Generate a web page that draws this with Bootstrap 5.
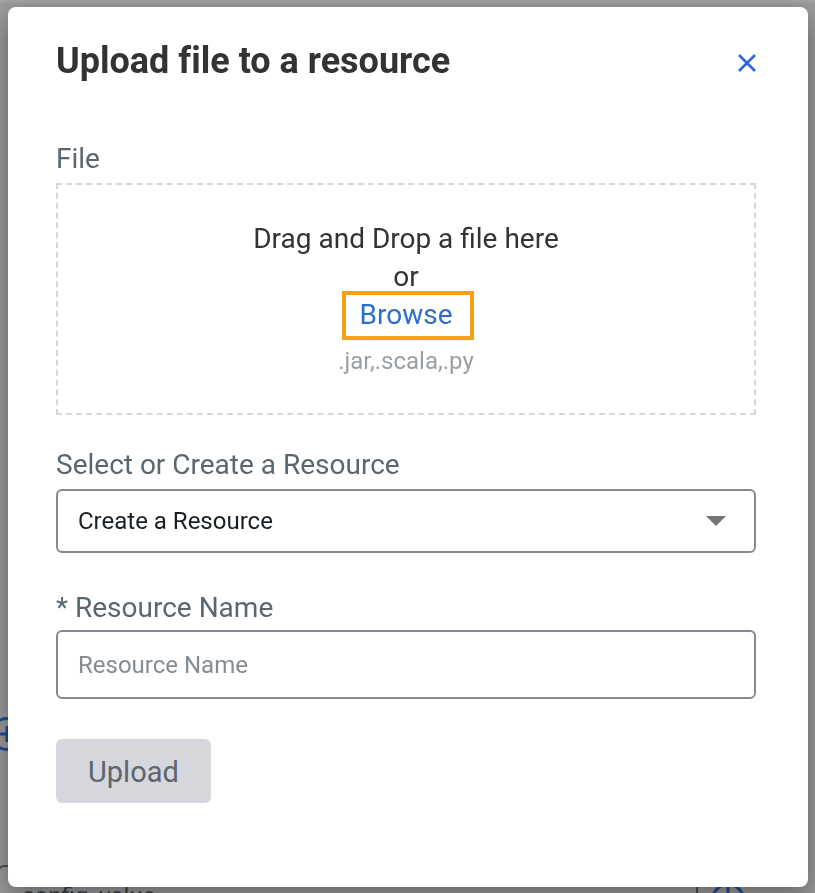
<!DOCTYPE html>
<html lang="en">
<head>
<meta charset="utf-8">
<meta name="viewport" content="width=device-width, initial-scale=1">
<title>Upload file to a resource</title>
<link href="https://cdn.jsdelivr.net/npm/bootstrap@5.3.0/dist/css/bootstrap.min.css" rel="stylesheet">
<style>
  body { font-family: Roboto, "Liberation Sans", sans-serif; background: #999; color: #333; }

  /* dimmed page behind the dialog */
  .under-page { position: fixed; inset: 0; overflow: hidden; background: #999; }
  .under-strip { height: 3px; background: #a3a3a3; }
  .under-bar { height: 32px; background: #9a9d9c; }
  .under-icon { display: block; width: 34px; height: 34px; fill: none; stroke: #1b4f9c; stroke-width: 3; }
  .under-add { margin: 682px 0 0 -10px; }
  .under-row { margin-top: 114px; gap: 13px; padding-right: 70px; }
  .under-field { height: 70px; padding: 0 20px 8px 22px; border: 2px solid #4c5053; border-radius: 6px; background: transparent; color: #3f4346; font-size: 24px; margin-left: -2px; }

  .dialog-wrap { min-height: 100vh; padding: 7px 7px 6px 8px; }
  .dialog-panel { padding: 32px 52px 84px 48px; border-radius: 8px; box-shadow: 0 8px 24px rgba(0, 0, 0, .35); }
  .dialog-title { font-size: 36px; line-height: 44px; font-weight: 700; color: #333; font-variant-ligatures: none; }
  .dialog-head { margin-bottom: 57px; }
  .close-btn { margin: 4px -8px 0 0; padding: 8px; line-height: 0; color: #2a68d4; }
  .field-label { font-size: 28px; line-height: 38px; color: #5b666d; margin-bottom: 5px; }
  .drop-zone { border: 2px dashed #d6d7dc; padding: 35px 16px 34px; margin-bottom: 31px; font-size: 28px; line-height: 38px; }
  .browse-btn { display: block; margin: -5px 0 3px 4px; padding: 1px 18px 2px 14px; border: 4px solid #f9a01b; border-radius: 0; font-size: 28px; line-height: 38px; color: #2b6fce; background: #fff; }
  .type-hint { font-size: 24px; line-height: 36px; color: #9a9fa4; }
  .field-box { border: 2px solid #838a90; border-radius: 6px; padding: 0 20px; font-size: 24px; background-color: #fff; }
  .field-box::placeholder { color: #838d93; }
  .resource-select { height: 64px; margin-bottom: 36px; color: #1a1f24; appearance: none; }
  .select-arrow { top: 27px; right: 30px; pointer-events: none; border: 10px solid transparent; border-top-color: #757575; border-bottom: 0; }
  .resource-input { height: 69px; margin-bottom: 40px; }
  .name-label { margin-bottom: 3px; }
  .upload-btn { height: 64px; padding: 3px 32px 0; border: 0; border-radius: 6px; font-size: 29px; }
  .upload-btn:disabled { background: #d6d7dc; color: #5b666d; opacity: 1; }
</style>
<script src="https://cdn.jsdelivr.net/npm/bootstrap@5.3.0/dist/js/bootstrap.bundle.min.js"></script>
</head>
<body>
<div class="under-page" aria-hidden="true">
  <div class="under-strip"></div>
  <div class="under-bar"></div>
  <svg class="under-icon under-add" viewBox="0 0 34 34"><circle cx="17" cy="17" r="15.5"/><path d="M17 9v16M9 17h16"/></svg>
  <div class="under-row d-flex align-items-center">
    <input class="under-field flex-grow-1" type="text" value="config_value" aria-label="Configuration value" tabindex="-1" readonly>
    <svg class="under-icon flex-shrink-0" viewBox="0 0 34 34"><circle cx="17" cy="17" r="15.5"/><path d="M17 4v26M9 17h16"/></svg>
  </div>
</div>

<div class="dialog-wrap position-relative d-flex">
  <main class="dialog-panel bg-white flex-grow-1" role="dialog" aria-modal="true" aria-labelledby="dialogTitle">
    <header class="dialog-head d-flex justify-content-between align-items-center">
      <h1 class="dialog-title m-0" id="dialogTitle">Upload file to a resource</h1>
      <button type="button" class="close-btn btn border-0" aria-label="Close">
        <svg width="18" height="18" viewBox="0 0 18 18" fill="none" stroke="currentColor" stroke-width="2.6"><path d="M1 1l16 16M17 1L1 17"/></svg>
      </button>
    </header>
    <form>
      <div class="field-label" id="fileLabel">File</div>
      <div class="drop-zone d-flex flex-column align-items-center text-center" role="group" aria-labelledby="fileLabel">
        <div>Drag and Drop a file here</div>
        <div>or</div>
        <button type="button" class="browse-btn">Browse</button>
        <div class="type-hint">.jar,.scala,.py</div>
      </div>
      <label class="field-label d-block" for="resource">Select or Create a Resource</label>
      <div class="position-relative">
        <select class="field-box resource-select d-block w-100" id="resource">
          <option>Create a Resource</option>
        </select>
        <span class="select-arrow position-absolute"></span>
      </div>
      <label class="field-label name-label d-block" for="resourceName">* Resource Name</label>
      <input class="field-box resource-input d-block w-100" type="text" id="resourceName" placeholder="Resource Name">
      <button type="submit" class="upload-btn" disabled>Upload</button>
    </form>
  </main>
</div>
</body>
</html>
